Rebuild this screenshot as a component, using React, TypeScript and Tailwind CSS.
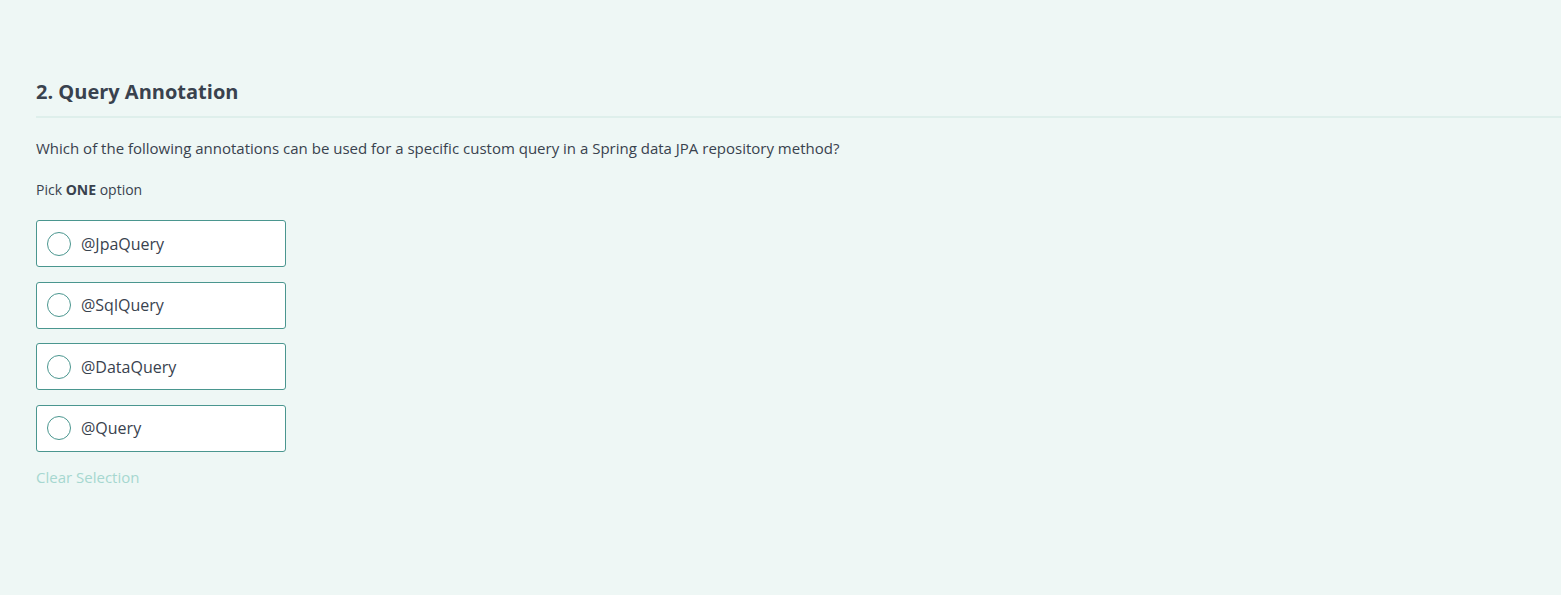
const options = ["@JpaQuery", "@SqlQuery", "@DataQuery", "@Query"];

export default function App() {
  return (
    <div className="min-h-[595px] bg-[#eef7f5] pl-9 pt-[78px] font-['Open_Sans',sans-serif] text-[#39424e]">
      <div className="border-b-2 border-[#deefeb] pb-[10px]">
        <h2 className="text-[20px] font-bold leading-[28px]">2. Query Annotation</h2>
      </div>
      <p className="mt-[20px] text-[15px] leading-[20px]">
        Which of the following annotations can be used for a specific custom query in a Spring data JPA repository method?
      </p>
      <p className="mt-[22px] text-[14px] leading-[20px]">
        Pick <span className="font-bold">ONE</span> option
      </p>
      <div className="mt-[20px] flex flex-col gap-[14.67px]">
        {options.map((opt) => (
          <label
            key={opt}
            className="flex h-[47px] w-[250px] cursor-pointer items-center gap-[10px] rounded-[3px] border border-[#4a968f] bg-white pl-[10px]"
          >
            <span className="h-[24px] w-[24px] rounded-full border border-[#4a968f]" />
            <span className="text-[16px] leading-[22px]">{opt}</span>
          </label>
        ))}
      </div>
      <button className="mt-[15px] text-[15px] leading-[20px] text-[#a6d7d0]">Clear Selection</button>
    </div>
  );
}
